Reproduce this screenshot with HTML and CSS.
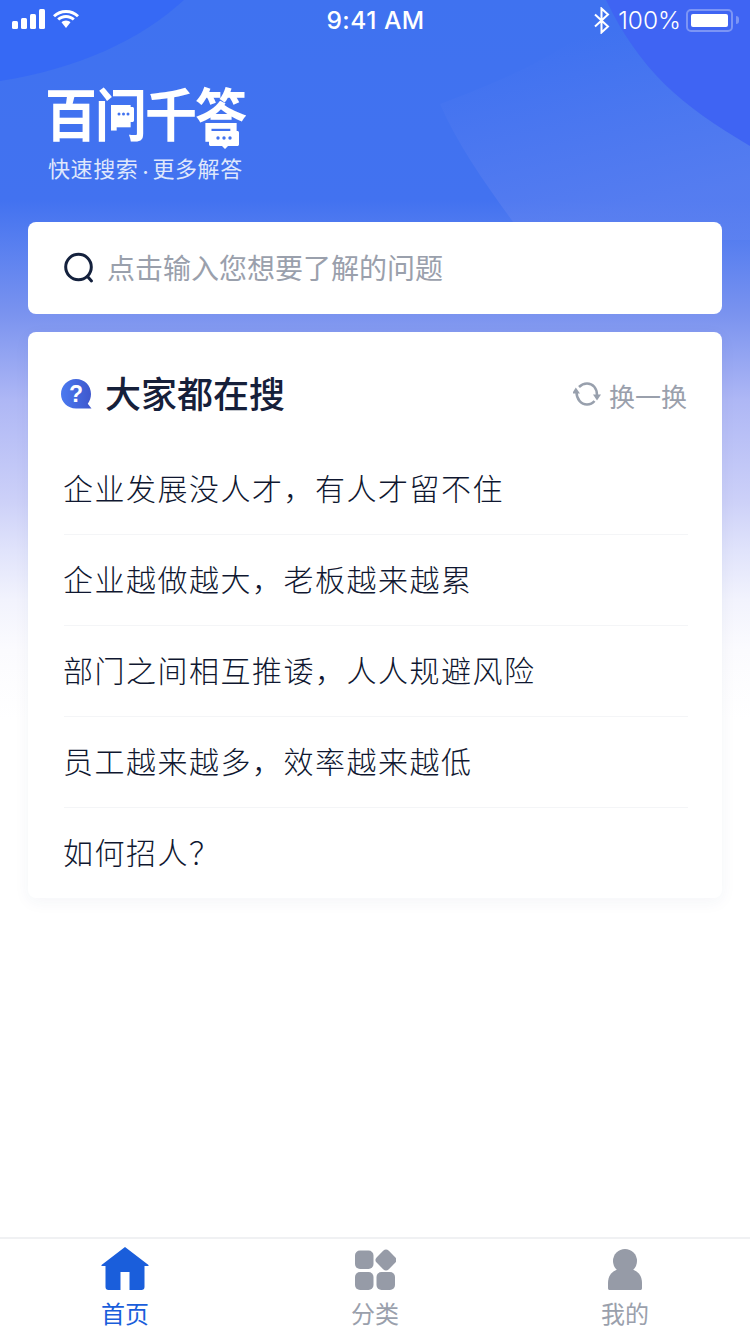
FILE: index.html
```html
<!DOCTYPE html>
<html lang="zh-CN">
<head>
    <meta charset="UTF-8">
    <meta name="viewport" content="width=device-width, initial-scale=1.0">
    <title>百问千答</title>
    <link rel="stylesheet" href="styles.css">
</head>
<body>
    <div class="page">
        <svg class="hero-bg" width="750" height="240" viewBox="0 0 750 240">
            <defs>
                <linearGradient id="glow" x1="0.3" y1="0.2" x2="0.5" y2="0.9">
                    <stop offset="0" stop-color="#5f82f0" stop-opacity="0"/>
                    <stop offset="1" stop-color="#5f82f0" stop-opacity=".65"/>
                </linearGradient>
            </defs>
            <path d="M0 0H184C140 40 80 68 0 81Z" fill="#3669f5"/>
            <path d="M440 104C560 60 610 20 606 0H750V240H526C490 190 460 150 440 104Z" fill="url(#glow)"/>
            <path d="M606 0H750V146C680 105 640 70 606 0Z" fill="#3f64f3"/>
        </svg>

        <div class="status-bar">
            <div class="status-left">
                <svg width="34" height="20" viewBox="0 0 34 20" fill="#fff">
                    <rect x="0" y="12" width="6" height="8" rx="1.5"/>
                    <rect x="9" y="9" width="6" height="11" rx="1.5"/>
                    <rect x="18" y="5" width="6" height="15" rx="1.5"/>
                    <rect x="27" y="0" width="6" height="20" rx="1.5"/>
                </svg>
                <svg width="26" height="19" viewBox="0 0 26 19" fill="#fff">
                    <path d="M13 3C17.500 3 21 4.600 24 7.300L26 5.200C22.500 1.900 18 0 13 0S3.500 1.900 0 5.200L2 7.300C5 4.600 8.500 3 13 3Z"/>
                    <path d="M13 8C15.700 8 18 9 19.800 10.600L21.800 8.500C19.500 6.400 16.400 5 13 5S6.500 6.400 4.200 8.500L6.200 10.600C8 9 10.300 8 13 8Z"/>
                    <path d="M13 10.500C11.300 10.500 9.700 11.200 8.500 12.300L13 18L17.500 12.300C16.300 11.200 14.700 10.500 13 10.500Z"/>
                </svg>
            </div>
            <div class="status-time">9:41 AM</div>
            <div class="status-right">
                <svg class="bt-icon" width="16" height="27" viewBox="0 0 16 27" fill="none" stroke="#fff" stroke-width="2">
                    <path d="M1 7.500L14 19.500L7.500 25.500V1.500L14 7.500L1 19.500"/>
                </svg>
                <span class="battery-pct">100%</span>
                <span class="battery"><span class="battery-fill"></span></span>
                <span class="battery-tip"></span>
            </div>
        </div>

        <div class="brand">
            <div class="brand-logo">
                <span class="brand-name">百问千答</span>
                <svg class="brand-bubbles" width="201" height="70" viewBox="0 0 201 70">
                    <path d="M68 27H85C86.500 27 87 27.500 87 29V40C87 41.500 86.500 42 85 42H81L78 45L76 42H68C66.500 42 66 41.500 66 40V29C66 27.500 66.500 27 68 27Z" fill="#fff"/>
                    <circle cx="72" cy="34" r="1.500" fill="#4173f0"/>
                    <circle cx="76.500" cy="34" r="1.500" fill="#4173f0"/>
                    <circle cx="81" cy="34" r="1.500" fill="#4173f0"/>
                    <path d="M164 51H190C191.500 51 192 51.500 192 53V64C192 65.500 191.500 66 190 66H181L178 69L175 66H164C162.500 66 162 65.500 162 64V53C162 51.500 162.500 51 164 51Z" fill="#fff"/>
                    <circle cx="171" cy="58" r="1.700" fill="#4173f0"/>
                    <circle cx="177" cy="58" r="1.700" fill="#4173f0"/>
                    <circle cx="183" cy="58" r="1.700" fill="#4173f0"/>
                </svg>
            </div>
            <div class="brand-sub">快速搜索<span class="brand-dot">·</span>更多解答</div>
        </div>

        <div class="search-box">
            <svg width="32" height="32" viewBox="0 0 32 32" fill="none" stroke="#14213d" stroke-width="3">
                <circle cx="15.500" cy="15" r="12.800"/>
                <path d="M24.500 24.500L28.500 29" stroke-linecap="round"/>
            </svg>
            <span class="search-text">点击输入您想要了解的问题</span>
        </div>

        <div class="hot-card">
            <div class="hot-head">
                <div class="hot-title">
                    <svg class="qm-icon" width="32" height="31" viewBox="0 0 32 31">
                        <defs>
                            <linearGradient id="qm" x1="0" y1="0" x2="1" y2="0">
                                <stop offset="0" stop-color="#4a7af0"/>
                                <stop offset="1" stop-color="#3f57cc"/>
                            </linearGradient>
                        </defs>
                        <path d="M15 0C23.500 0 30 6.500 30 15C30 19 28.800 22 26.800 24.700L30.500 29.500H15C6.500 29.500 0 23 0 15S6.500 0 15 0Z" fill="url(#qm)"/>
                        <text x="15" y="23" text-anchor="middle" class="qm-text">?</text>
                    </svg>
                    <h2>大家都在搜</h2>
                </div>
                <div class="hot-refresh">
                    <svg width="28" height="26" viewBox="0 0 28 26" fill="none" stroke="#98a0ad" stroke-width="2.500">
                        <path d="M3.500 10C3.500 17 8 22.500 14 22.500C17 22.500 19.500 21.500 21.500 19"/>
                        <path d="M6 5C8 3 10.500 1.500 14 1.500C20 1.500 24 6.500 24 13"/>
                        <path d="M2.800 5.500L7 11.500H-1Z" fill="#98a0ad" stroke="none"/>
                        <path d="M24 18.500L28 12.500H20Z" fill="#98a0ad" stroke="none"/>
                    </svg>
                    <span>换一换</span>
                </div>
            </div>
            <ul class="hot-list">
                <li>企业发展没人才，有人才留不住</li>
                <li>企业越做越大，老板越来越累</li>
                <li>部门之间相互推诿，人人规避风险</li>
                <li>员工越来越多，效率越来越低</li>
                <li>如何招人？</li>
            </ul>
        </div>

        <nav class="tab-bar">
            <div class="tab tab-active">
                <svg width="48" height="44" viewBox="0 0 48 44" fill="#1a5edb">
                    <path d="M24 0L47.500 18V19H43.500V40C43.500 42 42.300 43 40.500 43H28.500V25H19.500V43H7.500C5.700 43 4.500 42 4.500 40V19H0.500V18Z"/>
                </svg>
                <span>首页</span>
            </div>
            <div class="tab">
                <svg width="42" height="44" viewBox="0 0 42 44" fill="#969ba7">
                    <rect x="1" y="3.500" width="18.500" height="18.500" rx="5"/>
                    <rect x="23.500" y="4.500" width="17" height="17" rx="4" transform="rotate(45 32 13)"/>
                    <rect x="1" y="25" width="18.500" height="18" rx="5"/>
                    <rect x="22.500" y="25" width="18.500" height="18" rx="5"/>
                </svg>
                <span>分类</span>
            </div>
            <div class="tab">
                <svg width="36" height="44" viewBox="0 0 36 44" fill="#969ba7">
                    <circle cx="18" cy="14" r="12"/>
                    <path d="M3 43C1.500 43 1 42.500 1 41V36C1 28 6 23 13 22H23C30 23 35 28 35 36V41C35 42.500 34.500 43 33 43Z"/>
                </svg>
                <span>我的</span>
            </div>
        </nav>
    </div>
</body>
</html>
```

FILE: styles.css
```css
* {
    box-sizing: border-box;
}
html, body {
    margin: 0;
    padding: 0;
}
body {
    font-family: "Noto Sans CJK SC", "Noto Sans", sans-serif;
    color: #1a2238;
    background: #fff;
}
.page {
    position: relative;
    width: 750px;
    height: 1334px;
    overflow: hidden;
    display: flex;
    flex-direction: column;
    background: linear-gradient(180deg, #3f72f0 0, #4272f0 200px, #7a93ef 314px, #aeb7f5 400px, #ccd0f8 500px, #e0e3fb 550px, #f2f3fd 600px, #fbfbfe 650px, #fff 720px);
}
.hero-bg {
    position: absolute;
    left: 0;
    top: 0;
}
.status-bar {
    position: relative;
    height: 40px;
    padding: 0 11px 0 12px;
    display: grid;
    grid-template-columns: 1fr auto 1fr;
    align-items: center;
    color: #fff;
    font-family: Inter, "Liberation Sans", sans-serif;
    font-size: 24.500px;
}
.status-left {
    display: flex;
    align-items: center;
    gap: 7px;
    padding-bottom: 2px;
}
.status-time {
    font-weight: 500;
    letter-spacing: .5px;
}
.status-right {
    display: flex;
    align-items: center;
    justify-content: flex-end;
    gap: 5px;
}
.bt-icon {
    margin-right: 3px;
}
.battery-pct {
    font-size: 24.500px;
    font-weight: 300;
}
.battery {
    width: 47px;
    height: 23px;
    padding: 3px;
    border: 2px solid #7c95f5;
    border-radius: 5px;
    display: block;
}
.battery-fill {
    display: block;
    height: 100%;
    background: #fff;
    border-radius: 2px;
}
.battery-tip {
    width: 3px;
    height: 8px;
    margin-left: -2px;
    background: #7c95f5;
    border-radius: 0 3px 3px 0;
}
.brand {
    position: relative;
    height: 182px;
    padding: 40px 0 0 45px;
    color: #fff;
}
.brand-logo {
    position: relative;
    height: 70px;
}
.brand-name {
    display: block;
    font-size: 52px;
    line-height: 70px;
    font-weight: 700;
    letter-spacing: -2px;
    transform: translateY(-3px) scaleY(1.1);
}
.brand-bubbles {
    position: absolute;
    left: 2px;
    top: 0;
}
.brand-sub {
    margin: 5px 0 0 3px;
    font-size: 22px;
    line-height: 24px;
    letter-spacing: .6px;
    color: #dfe7fc;
}
.brand-dot {
    font-size: 14px;
    letter-spacing: 0;
}
.search-box {
    position: relative;
    margin: 0 28px;
    height: 92px;
    padding: 0 0 2px 35px;
    display: flex;
    align-items: center;
    gap: 12px;
    background: #fff;
    border-radius: 8px;
}
.search-box svg {
    margin-top: 2px;
}
.search-text {
    font-size: 28px;
    color: #9aa0ac;
}
.hot-card {
    position: relative;
    margin: 18px 28px 0;
    height: 566px;
    padding: 0 34px 0 36px;
    background: #fff;
    border-radius: 8px;
    box-shadow: 0 4px 16px rgba(30, 50, 110, .05);
}
.hot-head {
    height: 112px;
    padding-top: 8px;
    display: flex;
    align-items: center;
    justify-content: space-between;
}
.hot-title {
    display: flex;
    align-items: center;
    gap: 12px;
    margin-left: -3px;
}
.hot-title h2 {
    margin: 0;
    font-size: 36px;
    font-weight: 500;
    line-height: 50px;
    color: #16203a;
}
.qm-icon {
    margin-top: 4px;
}
.qm-text {
    fill: #fff;
    font-family: "Liberation Sans", sans-serif;
    font-size: 23px;
    font-weight: 700;
}
.hot-refresh {
    display: flex;
    align-items: center;
    gap: 8px;
    margin: 6px 1px 0 0;
    font-size: 26px;
    color: #9aa0ac;
}
.hot-list {
    list-style: none;
    margin: 0;
    padding: 0;
}
.hot-list li {
    height: 91px;
    line-height: 86px;
    font-size: 30px;
    font-weight: 300;
    letter-spacing: 1.500px;
    text-indent: -1px;
    color: #0f1730;
    border-bottom: 1px solid #f4f5f7;
}
.hot-list li:last-child {
    border-bottom: 0;
}
.tab-bar {
    position: absolute;
    left: 0;
    right: 0;
    bottom: 0;
    height: 97px;
    padding-top: 8px;
    display: grid;
    grid-template-columns: repeat(3, 250px);
    background: #fff;
    border-top: 2px solid #f0f1f3;
}
.tab {
    display: flex;
    flex-direction: column;
    align-items: center;
    gap: 5px;
    font-size: 24px;
    line-height: 34px;
    color: #9aa0ac;
}
.tab-active {
    color: #1a5edb;
}
```
